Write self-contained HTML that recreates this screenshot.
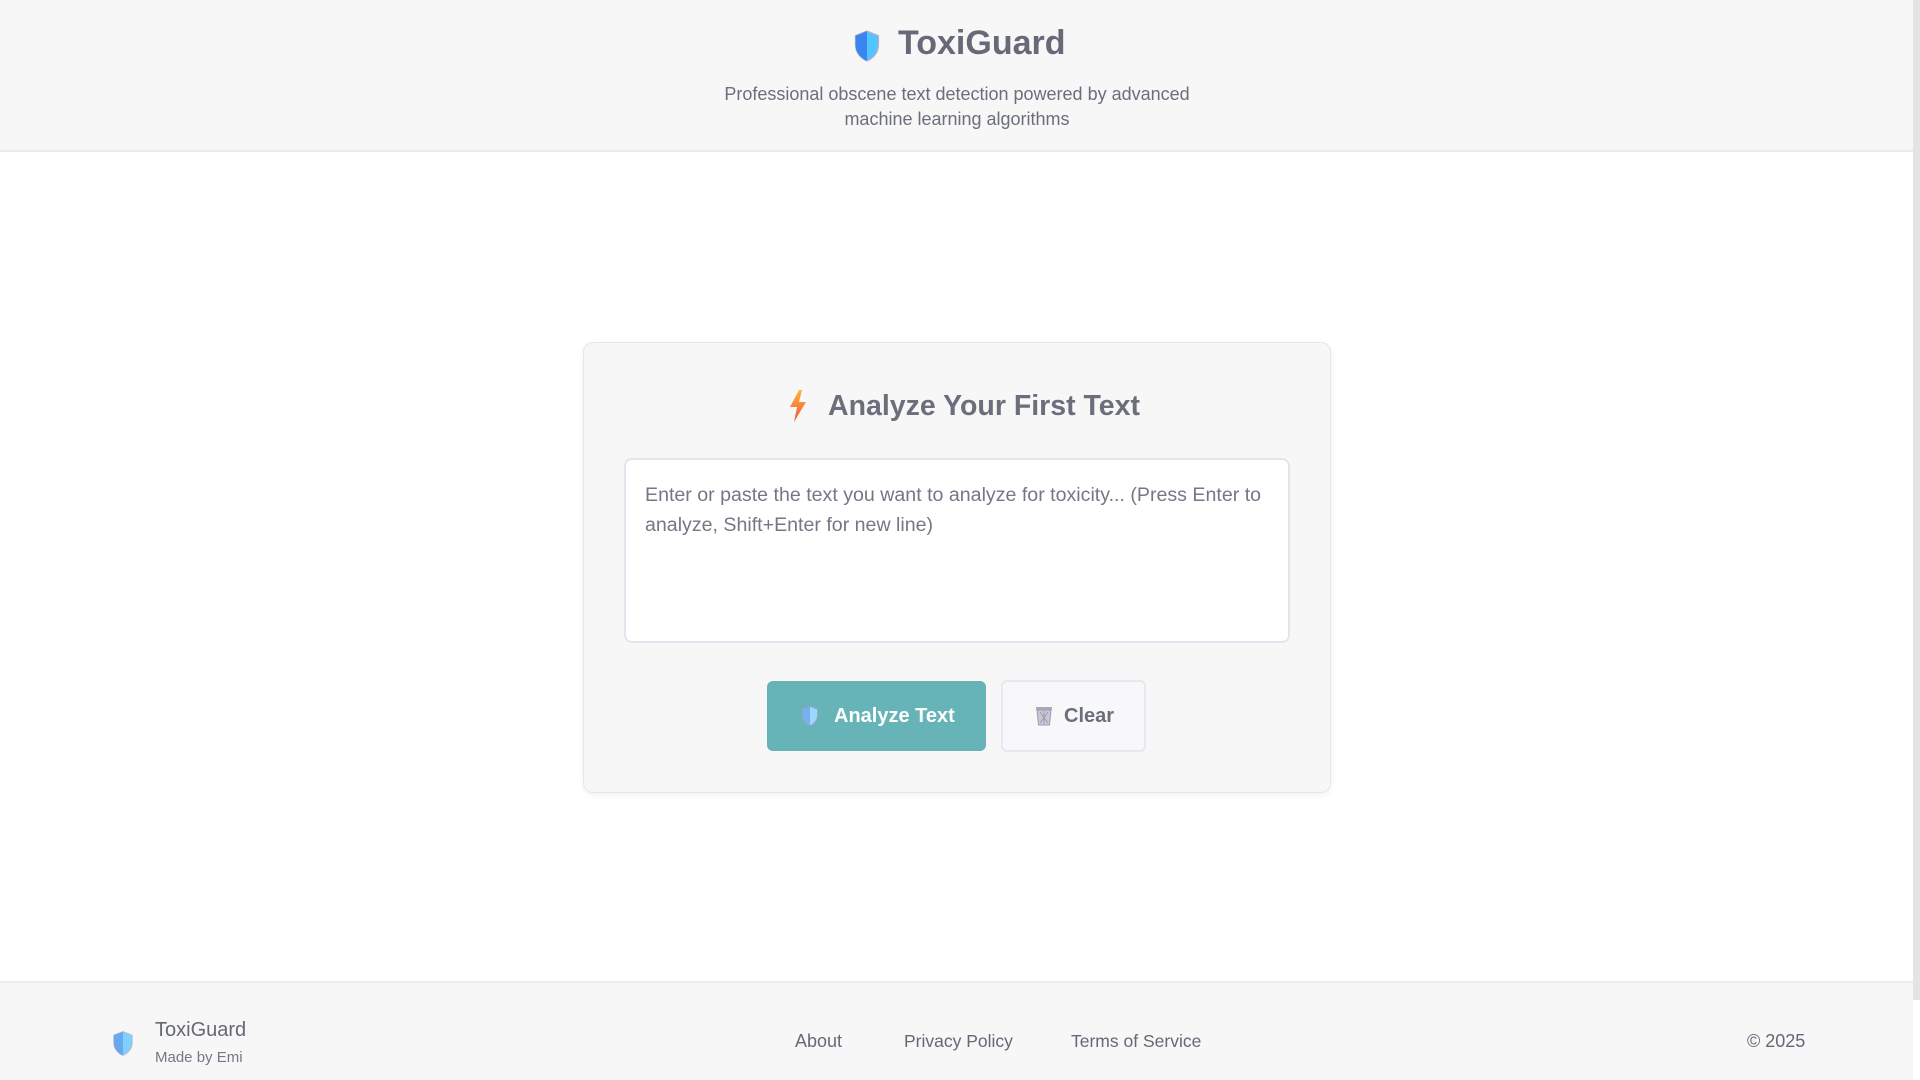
<!DOCTYPE html>
<html><head><meta charset="utf-8"><style>
*{box-sizing:border-box;margin:0;padding:0}
body{width:1920px;height:1080px;overflow:hidden;background:#fff;font-family:"Liberation Sans",sans-serif;color:#6b6e7b;position:relative}
.abs{position:absolute}
header{position:absolute;left:0;top:0;width:1913px;height:152px;background:#f7f7f8;border-bottom:2px solid #e9e9ee}
.sb{position:absolute;right:0;top:0;width:7px;height:1000px;background:#e4e4e6}
.t{white-space:nowrap}
footer{position:absolute;left:0;top:981px;width:1913px;height:99px;background:#f7f7f8;border-top:2px solid #ececf1}
</style></head><body>
<header>
<svg class="abs" style="left:853px;top:30px" width="28" height="32" viewBox="0 0 24 28"><path d="M12 1 L22 5 V13 C22 20 17 25 12 27 C7 25 2 20 2 13 V5 Z" fill="#52c4ff" stroke="#b8b0c8" stroke-width="1.2"/><path d="M12 1 L2 5 V13 C2 20 7 25 12 27 Z" fill="#3b86ee"/></svg>
<div class="abs t" style="left:898px;top:24px;font-size:34px;font-weight:bold;color:#676a76">ToxiGuard</div>
<div class="abs" style="left:700px;top:82px;width:514px;text-align:center;font-size:18px;line-height:25px;color:#6b6e7b">Professional obscene text detection powered by advanced machine learning algorithms</div>
</header>
<div class="abs" style="left:583px;top:342px;width:748px;height:451px;background:#f7f7f8;border:1px solid #e6e6ec;border-radius:10px;box-shadow:0 2px 6px rgba(0,0,0,.06)"></div>
<svg class="abs" style="left:789px;top:390px" width="18" height="32" viewBox="0 0 18 32"><defs><linearGradient id="g" x1="0" y1="0" x2="0" y2="1"><stop offset="0" stop-color="#ffb23a"/><stop offset="1" stop-color="#f2553a"/></linearGradient></defs><path d="M10 0 L1 17 H8 L5 32 L17 12 H10 L13 0 Z" fill="url(#g)"/></svg>
<div class="abs t" style="left:828px;top:390px;font-size:28.5px;font-weight:bold;color:#6b6e7b">Analyze Your First Text</div>
<div class="abs" style="left:624px;top:458px;width:666px;height:185px;background:#fff;border:2px solid #e5e4ee;border-radius:8px"></div>
<div class="abs" style="left:645px;top:480px;width:640px;font-size:19.6px;line-height:30px;color:#747785">Enter or paste the text you want to analyze for toxicity... (Press Enter to analyze, Shift+Enter for new line)</div>
<div class="abs" style="left:767px;top:681px;width:219px;height:70px;background:#66b4b7;border-radius:6px"></div>
<svg class="abs" style="left:801px;top:705px" width="18" height="22" viewBox="0 0 24 28"><path d="M12 1 L22 5 V13 C22 20 17 25 12 27 C7 25 2 20 2 13 V5 Z" fill="#9ad8ff" stroke="#9aa3c0" stroke-width="1.2"/><path d="M12 1 L2 5 V13 C2 20 7 25 12 27 Z" fill="#78aff0"/></svg>
<div class="abs t" style="left:834px;top:705px;font-size:20px;font-weight:bold;color:#fff">Analyze Text</div>
<div class="abs" style="left:1001px;top:680px;width:145px;height:72px;background:#f8f8fa;border:2px solid #e9e7f1;border-radius:6px"></div>
<svg class="abs" style="left:1035px;top:706px" width="18" height="20" viewBox="0 0 18 20"><rect x="1" y="1" width="16" height="3" fill="#a9a7b9"/><path d="M2 4 H16 L14.5 19 H3.5 Z" fill="#c9c8d6" stroke="#9e9cb0"/><path d="M5 6 L13 17 M13 6 L5 17 M9 5 V18" stroke="#9e9cb0" stroke-width="1"/></svg>
<div class="abs t" style="left:1064px;top:705px;font-size:20px;font-weight:bold;color:#6b6e7b">Clear</div>
<footer>
<svg class="abs" style="left:112px;top:47px" width="22" height="27" viewBox="0 0 24 28"><path d="M12 1 L22 5 V13 C22 20 17 25 12 27 C7 25 2 20 2 13 V5 Z" fill="#7dd0ff" stroke="#c0bccc" stroke-width="1.2"/><path d="M12 1 L2 5 V13 C2 20 7 25 12 27 Z" fill="#6aa8ee"/></svg>
<div class="abs t" style="left:155px;top:36px;font-size:20px;color:#656875">ToxiGuard</div>
<div class="abs t" style="left:155px;top:66px;font-size:15px;color:#757886">Made by Emi</div>
<div class="abs t" style="left:795px;top:48px;font-size:18px;color:#656875">About</div>
<div class="abs t" style="left:904px;top:48px;font-size:17.5px;color:#656875">Privacy Policy</div>
<div class="abs t" style="left:1071px;top:48px;font-size:17.5px;color:#656875">Terms of Service</div>
<div class="abs t" style="left:1747px;top:48px;font-size:18px;color:#656875">© 2025</div>
</footer>
<div class="sb"></div>
</body></html>
